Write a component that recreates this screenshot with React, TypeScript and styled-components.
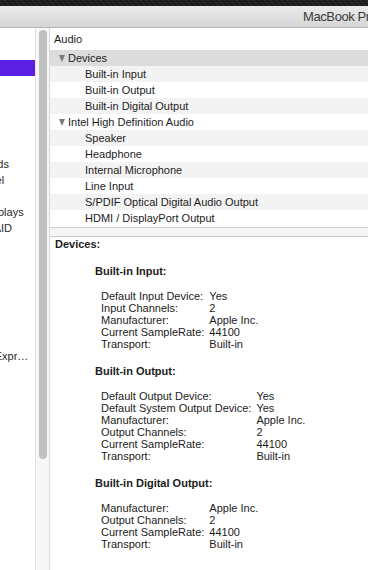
import React, {FC} from 'react';
import styled, {createGlobalStyle} from 'styled-components';

const GlobalStyle = createGlobalStyle`
  html, body {
    margin: 0;
    padding: 0;
    background: #1d1d1d;
  }
  * {
    box-sizing: border-box;
  }
`

const sidebarItems = [
    'ATA', 'Apple Pay', 'Audio', 'Bluetooth', 'Camera', 'Card Reader', 'Diagnostics',
    'Disc Burning', 'Ethernet Cards', 'Fibre Channel', 'FireWire', 'Graphics/Displays',
    'Hardware RAID', 'Memory', 'NVMExpress', 'PCI', 'Parallel SCSI', 'Power', 'Printers',
    'SAS', 'SATA/SATA Express', 'SPI', 'Storage', 'Thunderbolt', 'USB', 'Network', 'Firewall',
]

type TreeItem = { label: string; level: 0 | 1 }

const treeItems: TreeItem[] = [
    {label: 'Devices', level: 0},
    {label: 'Built-in Input', level: 1},
    {label: 'Built-in Output', level: 1},
    {label: 'Built-in Digital Output', level: 1},
    {label: 'Intel High Definition Audio', level: 0},
    {label: 'Speaker', level: 1},
    {label: 'Headphone', level: 1},
    {label: 'Internal Microphone', level: 1},
    {label: 'Line Input', level: 1},
    {label: 'S/PDIF Optical Digital Audio Output', level: 1},
    {label: 'HDMI / DisplayPort Output', level: 1},
]

type Device = { name: string; props: [string, string][] }

const devices: Device[] = [
    {
        name: 'Built-in Input:',
        props: [
            ['Default Input Device:', 'Yes'],
            ['Input Channels:', '2'],
            ['Manufacturer:', 'Apple Inc.'],
            ['Current SampleRate:', '44100'],
            ['Transport:', 'Built-in'],
        ],
    },
    {
        name: 'Built-in Output:',
        props: [
            ['Default Output Device:', 'Yes'],
            ['Default System Output Device:', 'Yes'],
            ['Manufacturer:', 'Apple Inc.'],
            ['Output Channels:', '2'],
            ['Current SampleRate:', '44100'],
            ['Transport:', 'Built-in'],
        ],
    },
    {
        name: 'Built-in Digital Output:',
        props: [
            ['Manufacturer:', 'Apple Inc.'],
            ['Output Channels:', '2'],
            ['Current SampleRate:', '44100'],
            ['Transport:', 'Built-in'],
        ],
    },
]

const App: FC = () => {
    return (
        <>
            <GlobalStyle/>
            <Window>
                <TopStrip/>
                <TitleBar>MacBook Pro</TitleBar>
                <Body>
                    <Sidebar>
                        {sidebarItems.map(item => (
                            <SidebarRow key={item} $selected={item === 'Audio'}>
                                <SidebarLabel>{item}</SidebarLabel>
                            </SidebarRow>
                        ))}
                    </Sidebar>
                    <ScrollTrack>
                        <ScrollThumb/>
                    </ScrollTrack>
                    <Main>
                        <Header>Audio</Header>
                        <Tree>
                            {treeItems.map((item, i) => (
                                <TreeRow key={item.label} $level={item.level} $stripe={i % 2 === 1}
                                         $selected={i === 0}>
                                    {item.level === 0 && <Disclosure/>}
                                    {item.label}
                                </TreeRow>
                            ))}
                        </Tree>
                        <Splitter/>
                        <Details>
                            <DetailsTitle>Devices:</DetailsTitle>
                            {devices.map(device => (
                                <Section key={device.name}>
                                    <SectionTitle>{device.name}</SectionTitle>
                                    <Props>
                                        {device.props.map(([key, value]) => (
                                            <React.Fragment key={key}>
                                                <span>{key}</span>
                                                <span>{value}</span>
                                            </React.Fragment>
                                        ))}
                                    </Props>
                                </Section>
                            ))}
                        </Details>
                    </Main>
                </Body>
            </Window>
        </>
    );
};

const font = `'Liberation Sans', Arial, sans-serif`

const Window = styled.div`
  width: 368px;
  height: 570px;
  overflow: hidden;
  display: flex;
  flex-direction: column;
  font-family: ${font};
  font-size: 11px;
  color: #1c1c1c;
  background: #fff;
`

const TopStrip = styled.div`
  height: 6px;
  flex-shrink: 0;
  background: repeating-linear-gradient(45deg, #1b1b1b 0 2px, #242424 2px 4px);
`

const TitleBar = styled.div`
  height: 22px;
  flex-shrink: 0;
  padding-left: 303px;
  line-height: 21px;
  font-size: 13px;
  letter-spacing: -0.4px;
  color: #3a3a3a;
  white-space: nowrap;
  overflow: hidden;
  background: linear-gradient(#ebebeb, #d5d5d5);
  border-bottom: 1px solid #b4b4b4;
`

const Body = styled.div`
  flex: 1;
  display: flex;
  min-height: 0;
`

const Sidebar = styled.div`
  width: 35px;
  flex-shrink: 0;
  overflow: hidden;
  background: #fff;
`

const SidebarRow = styled.div<{ $selected: boolean }>`
  height: 16px;
  line-height: 16px;
  background: ${p => p.$selected ? '#5b1fe2' : 'transparent'};
  color: ${p => p.$selected ? '#fff' : '#2a2a2a'};
`

const SidebarLabel = styled.div`
  width: 96px;
  margin-left: -65px;
  white-space: nowrap;
  overflow: hidden;
  text-overflow: ellipsis;
`

const ScrollTrack = styled.div`
  width: 15px;
  flex-shrink: 0;
  padding: 2px 3px 0 3px;
  background: #f7f7f7;
  border-left: 1px solid #e4e4e4;
  border-right: 1px solid #d9d9d9;
`

const ScrollThumb = styled.div`
  width: 8px;
  height: 429px;
  border-radius: 4px;
  background: #c1c1c1;
`

const Main = styled.div`
  flex: 1;
  min-width: 0;
  display: flex;
  flex-direction: column;
`

const Header = styled.div`
  height: 22px;
  flex-shrink: 0;
  line-height: 22px;
  padding-left: 4px;
  background: #fff;
`

const Tree = styled.div`
  flex-shrink: 0;
`

const TreeRow = styled.div<{ $level: number; $stripe: boolean; $selected: boolean }>`
  height: 16px;
  line-height: 16px;
  white-space: nowrap;
  padding-left: ${p => p.$level === 0 ? 9 : 35}px;
  background: ${p => p.$selected ? '#dcdcdc' : p.$stripe ? '#f3f3f3' : '#fff'};
`

const Disclosure = styled.span`
  display: inline-block;
  width: 0;
  height: 0;
  margin: 0 3px 1px 0;
  border-left: 3.5px solid transparent;
  border-right: 3.5px solid transparent;
  border-top: 7px solid #7a7a7a;
  vertical-align: middle;
`

const Splitter = styled.div`
  height: 10px;
  flex-shrink: 0;
  margin-top: 1px;
  background: #f5f5f5;
  border-top: 1px solid #d0d0d0;
  border-bottom: 1px solid #c9c9c9;
`

const Details = styled.div`
  flex: 1;
  padding: 1px 0 0 5px;
  line-height: 12px;
  background: #fff;
`

const DetailsTitle = styled.div`
  font-weight: bold;
`

const Section = styled.div`
  margin-top: 15px;
  padding-left: 40px;
`

const SectionTitle = styled.div`
  font-weight: bold;
`

const Props = styled.div`
  display: grid;
  grid-template-columns: max-content max-content;
  column-gap: 5px;
  margin-top: 13px;
  padding-left: 6px;
`

export default App;
